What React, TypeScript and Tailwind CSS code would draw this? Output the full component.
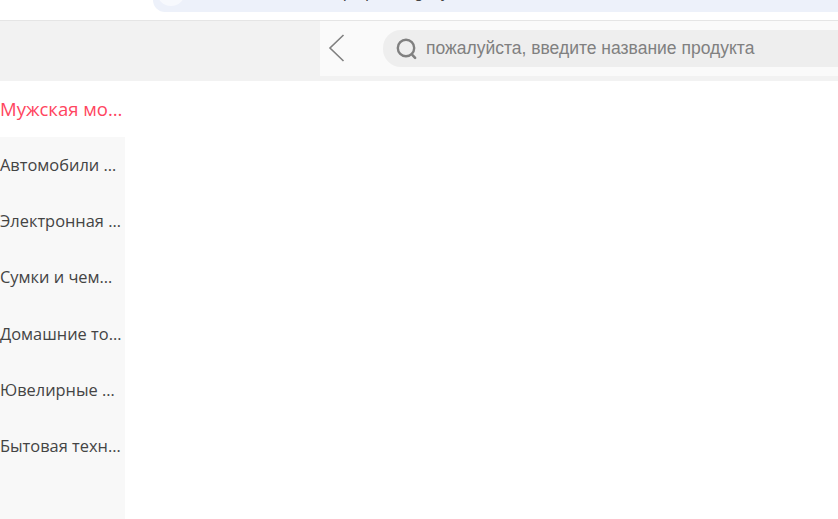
const items = [
  "Автомобили и мотоциклы",
  "Электронная техника",
  "Сумки и чемоданы",
  "Домашние товары",
  "Ювелирные изделия",
  "Бытовая техника",
];

export default function App() {
  return (
    <div className="h-[519px] w-[838px] overflow-hidden bg-white font-['Open_Sans','Noto_Sans',sans-serif]">
      <div className="h-5 overflow-hidden">
        <div className="relative ml-[153px] h-3 overflow-hidden rounded-bl-[14px] bg-[#edf1fa]">
          <div className="absolute left-[4px] top-[-22px] h-7 w-7 rounded-full bg-[#f7f9fd]" />
          <div className="absolute left-[190px] top-[-16px] whitespace-pre font-['Liberation_Sans',sans-serif] text-[16px] leading-[18px] text-[#444]">
            {"р   р         g    у"}
          </div>
        </div>
      </div>
      <div className="flex h-[61px] border-t border-[#e5e5e5] bg-[#f2f2f2]">
        <div className="ml-[320px] flex h-[55px] flex-1 items-center bg-[#fafafa]">
          <svg width="18" height="28" viewBox="0 0 18 28" fill="none" className="ml-[8px] mt-[-1px]" stroke="#808080" strokeWidth="1.6">
            <path d="M15.5 1 2 14l13.5 13" />
          </svg>
          <div className="ml-[37px] flex h-[37px] flex-1 items-center rounded-l-[18px] bg-[#eeeeee]">
            <svg width="24" height="24" viewBox="0 0 24 24" fill="none" className="ml-[12px]" stroke="#808080">
              <circle cx="11" cy="11" r="8.2" strokeWidth="2.4" />
              <path d="m17.5 18.2 2.6 2.6" strokeWidth="2.6" strokeLinecap="round" />
            </svg>
            <span className="ml-[7px] font-['Liberation_Sans',sans-serif] text-[17.5px] text-[#808080]">
              пожалуйста, введите название продукта
            </span>
          </div>
        </div>
      </div>
      <div className="flex h-[56px] w-[125px] items-center">
        <div className="w-[123px] truncate text-[18.5px] text-[#ff4560]">Мужская мода и аксессуары</div>
      </div>
      <div className="h-[382px] w-[125px] bg-[#f8f8f8]">
        {items.map((t) => (
          <div key={t} className="flex h-[56.3px] items-center">
            <div className="w-[122px] truncate text-[16.4px] text-[#444]">{t}</div>
          </div>
        ))}
      </div>
    </div>
  );
}
